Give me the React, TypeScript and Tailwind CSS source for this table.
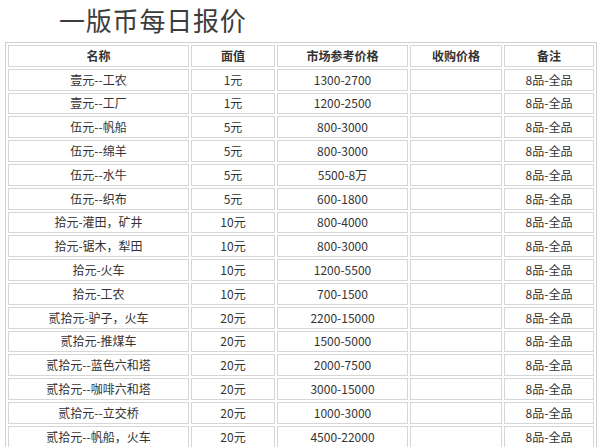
import React from "react";

const rows: [string, string, string][] = [
  ["壹元--工农", "1元", "1300-2700"],
  ["壹元--工厂", "1元", "1200-2500"],
  ["伍元--帆船", "5元", "800-3000"],
  ["伍元--绵羊", "5元", "800-3000"],
  ["伍元--水牛", "5元", "5500-8万"],
  ["伍元--织布", "5元", "600-1800"],
  ["拾元-灌田，矿井", "10元", "800-4000"],
  ["拾元-锯木，犁田", "10元", "800-3000"],
  ["拾元-火车", "10元", "1200-5500"],
  ["拾元-工农", "10元", "700-1500"],
  ["贰拾元-驴子，火车", "20元", "2200-15000"],
  ["贰拾元-推煤车", "20元", "1500-5000"],
  ["贰拾元--蓝色六和塔", "20元", "2000-7500"],
  ["贰拾元--咖啡六和塔", "20元", "3000-15000"],
  ["贰拾元--立交桥", "20元", "1000-3000"],
  ["贰拾元--帆船，火车", "20元", "4500-22000"],
];

const cell = "border border-[#d6d6d6] h-[21.8px] p-0 text-center align-middle";

export default function App() {
  return (
    <div
      className="w-[600px] h-[447px] overflow-hidden bg-white text-[#333]"
      style={{ fontFamily: '"Noto Sans CJK SC", "Liberation Sans", sans-serif' }}
    >
      <div className="h-[42px] pl-[59px] pt-[3px] text-[26px] leading-[34px] text-[#3c3c3c] font-normal tracking-[0.8px]">
        一版币每日报价
      </div>
      <table className="ml-[5px] w-[592px] border border-[#cfcfcf] border-separate border-spacing-[2px] table-fixed text-[12px] leading-[14px]">
        <colgroup>
          <col className="w-[181px]" />
          <col className="w-[84px]" />
          <col className="w-[131px]" />
          <col className="w-[92px]" />
          <col className="w-[90px]" />
        </colgroup>
        <thead>
          <tr className="font-bold">
            <td className={cell}>名称</td>
            <td className={cell}>面值</td>
            <td className={cell}>市场参考价格</td>
            <td className={cell}>收购价格</td>
            <td className={cell}>备注</td>
          </tr>
        </thead>
        <tbody>
          {rows.map((r, i) => (
            <tr key={i}>
              <td className={cell}>{r[0]}</td>
              <td className={cell}>{r[1]}</td>
              <td className={cell}>{r[2]}</td>
              <td className={cell}></td>
              <td className={cell}>8品-全品</td>
            </tr>
          ))}
        </tbody>
      </table>
    </div>
  );
}
